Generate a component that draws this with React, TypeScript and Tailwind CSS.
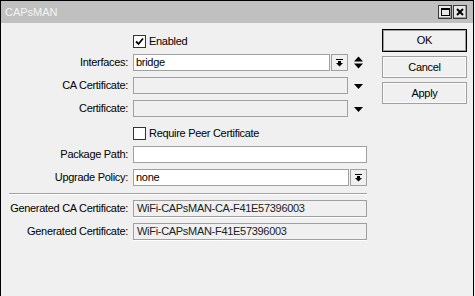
import React from "react";

const DropBtnIcon = () => (
  <svg width="7" height="8" viewBox="0 0 7 8">
    <rect x="0" y="0" width="7" height="1" fill="#000" />
    <rect x="2" y="2" width="3" height="2" fill="#000" />
    <polygon points="0,4 7,4 3.5,7.5" fill="#000" />
  </svg>
);

const DropBtn = () => (
  <div className="w-[17px] h-[17px] border border-[#a0a0a0] bg-[#f0f0f0] flex items-center justify-center">
    <DropBtnIcon />
  </div>
);

const UpDown = () => (
  <svg width="9" height="13" viewBox="0 0 9 13">
    <polygon points="0,5.5 9,5.5 4.5,0.5" fill="#000" />
    <polygon points="0,7.5 9,7.5 4.5,12.5" fill="#000" />
  </svg>
);

const Down = () => (
  <svg width="9" height="5" viewBox="0 0 9 5" className="mt-[2px]">
    <polygon points="0,0 9,0 4.5,5" fill="#000" />
  </svg>
);

const Checkbox = ({ checked }: { checked: boolean }) => (
  <div className="w-[13px] h-[13px] border border-[#333] bg-white flex items-center justify-center">
    {checked && (
      <svg width="9" height="9" viewBox="0 0 9 9">
        <path d="M1 4.5 L3.5 7 L8 1.5" stroke="#000" strokeWidth="1.8" fill="none" />
      </svg>
    )}
  </div>
);

const Row = ({
  label,
  children,
  className = "",
}: {
  label?: string;
  children: React.ReactNode;
  className?: string;
}) => (
  <div className={`flex h-[17px] items-center ${className}`}>
    <div className="w-[121px] shrink-0 text-right pr-[1px] whitespace-nowrap">{label}</div>
    <div className="ml-[4px] w-[234px] flex items-center h-full">{children}</div>
  </div>
);

const Btn = ({ label, def, className = "" }: { label: string; def?: boolean; className?: string }) => (
  <div
    className={`w-[85px] flex items-center justify-center bg-[#f0f0f0] ${
      def
        ? "border border-black shadow-[inset_0_0_0_1px_#a0a0a0] h-[23px]"
        : "border border-[#a0a0a0] shadow-[inset_0_0_0_1px_#fafafa] h-[22px]"
    } ${className}`}
  >
    {label}
  </div>
);

export default function App() {
  return (
    <div className="w-[475px] h-[296px] bg-[#f0f0f0] overflow-hidden">
      <div className="w-[474px] h-[296px] border-l border-r border-t border-black bg-[#f0f0f0] flex flex-col font-['Liberation_Sans',Arial,sans-serif] text-[11px] tracking-[-0.3px] text-black">
        <div className="h-[22px] bg-[#c0c0c0] flex items-center pl-[4px] pr-[6px] shrink-0">
          <span className="text-[#f4f4f4] tracking-normal">CAPsMAN</span>
          <div className="ml-auto flex gap-[1px]">
            <div className="w-[14px] h-[14px] border border-[#3a3a3a] bg-[#e8e8e8] shadow-[inset_-1px_-1px_0_#a0a0a0] flex items-center justify-center">
              <svg width="9" height="8" viewBox="0 0 9 8">
                <rect x="0.5" y="0.5" width="8" height="7" fill="none" stroke="#000" />
                <rect x="0" y="0" width="9" height="2" fill="#000" />
              </svg>
            </div>
            <div className="w-[14px] h-[14px] border border-[#3a3a3a] bg-[#e8e8e8] shadow-[inset_-1px_-1px_0_#a0a0a0] flex items-center justify-center">
              <svg width="8" height="8" viewBox="0 0 8 8">
                <path d="M1 1 L7 7 M7 1 L1 7" stroke="#000" strokeWidth="2" />
              </svg>
            </div>
          </div>
        </div>
        <div className="flex">
          <div className="w-[366px] pl-[7px] pt-[10px] flex flex-col">
            <Row>
              <Checkbox checked />
              <span className="ml-[3px]">Enabled</span>
            </Row>
            <Row label="Interfaces:" className="mt-[4px]">
              <div className="w-[197px] h-[17px] border border-[#a0a0a0] bg-white pl-[2px] flex items-center">bridge</div>
              <div className="ml-[1px]">
                <DropBtn />
              </div>
              <div className="ml-[6px] flex items-center">
                <UpDown />
              </div>
            </Row>
            <Row label="CA Certificate:" className="mt-[6px]">
              <div className="w-[215px] h-[17px] border border-[#a0a0a0] bg-[#f0f0f0]" />
              <div className="ml-[6px] flex items-center">
                <Down />
              </div>
            </Row>
            <Row label="Certificate:" className="mt-[6px]">
              <div className="w-[215px] h-[17px] border border-[#a0a0a0] bg-[#f0f0f0]" />
              <div className="ml-[6px] flex items-center">
                <Down />
              </div>
            </Row>
            <Row className="mt-[8px]">
              <Checkbox checked={false} />
              <span className="ml-[3px]">Require Peer Certificate</span>
            </Row>
            <Row label="Package Path:" className="mt-[4px]">
              <div className="w-[234px] h-[17px] border border-[#a0a0a0] bg-white" />
            </Row>
            <Row label="Upgrade Policy:" className="mt-[6px]">
              <div className="flex-1 h-[17px] border border-[#a0a0a0] bg-white pl-[2px] flex items-center">none</div>
              <div className="ml-[1px]">
                <DropBtn />
              </div>
            </Row>
            <div className="mt-[7px] ml-[1px] h-[2px] border-t border-[#a0a0a0] border-b border-b-white" />
            <Row label="Generated CA Certificate:" className="mt-[5px]">
              <div className="w-[234px] h-[17px] border border-[#a0a0a0] bg-[#f0f0f0] shadow-[0_1px_0_#fff] pl-[3px] flex items-center text-[#222]">
                WiFi-CAPsMAN-CA-F41E57396003
              </div>
            </Row>
            <Row label="Generated Certificate:" className="mt-[6px]">
              <div className="w-[234px] h-[17px] border border-[#a0a0a0] bg-[#f0f0f0] shadow-[0_1px_0_#fff] pl-[3px] flex items-center text-[#222]">
                WiFi-CAPsMAN-F41E57396003
              </div>
            </Row>
          </div>
          <div className="ml-[15px] pt-[6px] flex flex-col">
            <Btn label="OK" def />
            <Btn label="Cancel" className="mt-[4px]" />
            <Btn label="Apply" className="mt-[4px]" />
          </div>
        </div>
      </div>
    </div>
  );
}
